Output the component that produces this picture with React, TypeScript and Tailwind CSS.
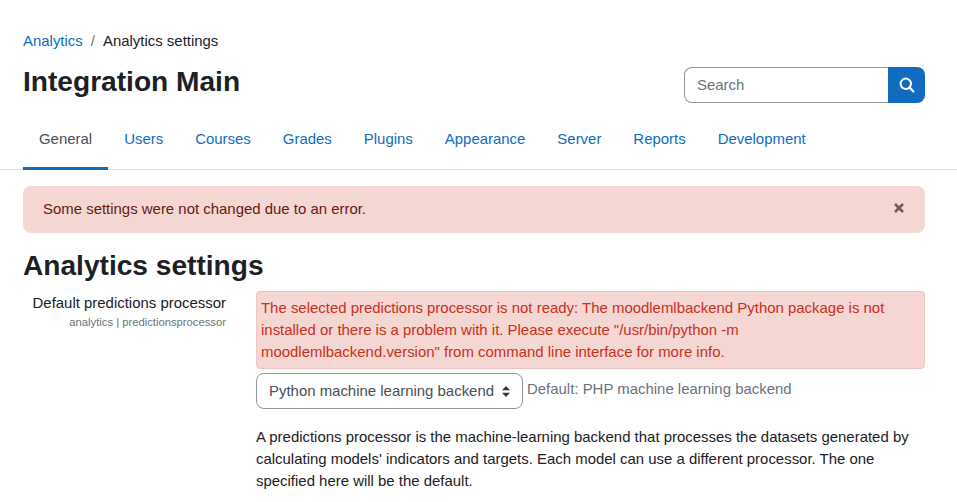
import React from "react";

const tabs = ["Users", "Courses", "Grades", "Plugins", "Appearance", "Server", "Reports", "Development"];

export default function App() {
  return (
    <div className="h-[502px] overflow-hidden bg-white font-['Liberation_Sans',sans-serif] text-[14.95px] leading-[22px] text-[#1d2125]">
      {/* Header */}
      <div className="flex items-start justify-between pl-[23px] pr-[32px] pt-[30px]">
        <div>
          <div className="flex h-[22px] items-center">
            <a className="text-[#0f6cbf]">Analytics</a>
            <span className="px-[8px] text-[#6a737b]">/</span>
            <span>Analytics settings</span>
          </div>
          <h1 className="mt-[13px] text-[28.125px] font-bold leading-[34px]">Integration Main</h1>
        </div>
        <div className="mt-[37px] flex h-[36px] w-[241px]">
          <div className="flex flex-1 items-center rounded-l-[8px] border border-r-0 border-[#8f959e] pl-[12px] text-[#6a737b]">Search</div>
          <div className="flex w-[37px] items-center justify-center rounded-r-[8px] bg-[#0f6cbf]">
            <svg width="16" height="16" viewBox="0 0 16 16" fill="none" stroke="white">
              <circle cx="6.8" cy="6.8" r="5.2" strokeWidth="2" />
              <path d="M10.6 10.6 L15 15" strokeWidth="2.2" />
            </svg>
          </div>
        </div>
      </div>

      {/* Tabs */}
      <nav className="mt-[5px] flex h-[62px] border-b border-[#dee2e6] pl-[23px]">
        <a className="flex h-[62px] items-center border-b-[3px] border-[#0f6cbf] px-[16px] pt-[3px] text-[#495057]">General</a>
        {tabs.map((t) => (
          <a key={t} className="flex h-[62px] items-center px-[16px] text-[#0f6cbf]">{t}</a>
        ))}
      </nav>

      <div className="pl-[23px] pr-[32px]">
        {/* Alert */}
        <div className="mt-[16px] flex h-[47px] items-center justify-between rounded-[8px] bg-[#f4d6d2] pl-[20px] pr-[20px] text-[#691911]">
          <span className="mb-[2px]">Some settings were not changed due to an error.</span>
          <svg width="12" height="12" viewBox="0 0 12 12" className="mb-[3px]">
            <path d="M2 2 L10 10 M10 2 L2 10" stroke="#6d5c5b" strokeWidth="2.6" />
          </svg>
        </div>

        <h2 className="mt-[16px] text-[28.125px] font-bold leading-[34px]">Analytics settings</h2>

        {/* Setting row */}
        <div className="mt-[8px] flex">
          <div className="w-[203px] shrink-0 pt-[1px] text-right">
            <div className="leading-[22px]">Default predictions processor</div>
            <div className="text-[11.25px] leading-[17px] text-[#6a737b]">analytics | predictionsprocessor</div>
          </div>
          <div className="ml-[30px] min-w-0 flex-1">
            <div className="rounded-[4px] border border-[#f0c5c1] bg-[#f4d6d2] px-[4px] pb-[5px] pt-[5px] text-[#ca3120]">
              The selected predictions processor is not ready: The moodlemlbackend Python package is not installed or there is a problem with it. Please execute "/usr/bin/python -m moodlemlbackend.version" from command line interface for more info.
            </div>
            <div className="mt-[4px] flex items-start">
              <div className="flex h-[36px] w-[267px] items-center justify-between rounded-[8px] border border-[#8f959e] pl-[12px] pr-[12px] text-[#495057]">
                <span>Python machine learning backend</span>
                <svg width="8" height="11" viewBox="0 0 8 11">
                  <path d="M4 0 L8 4.2 H0 Z M4 11 L0 6.8 H8 Z" fill="#343a40" />
                </svg>
              </div>
              <span className="ml-[4px] mt-[5px] text-[#6a737b]">Default: PHP machine learning backend</span>
            </div>
            <p className="mt-[17px]">
              A predictions processor is the machine-learning backend that processes the datasets generated by calculating models' indicators and targets. Each model can use a different processor. The one specified here will be the default.
            </p>
          </div>
        </div>
      </div>
    </div>
  );
}
